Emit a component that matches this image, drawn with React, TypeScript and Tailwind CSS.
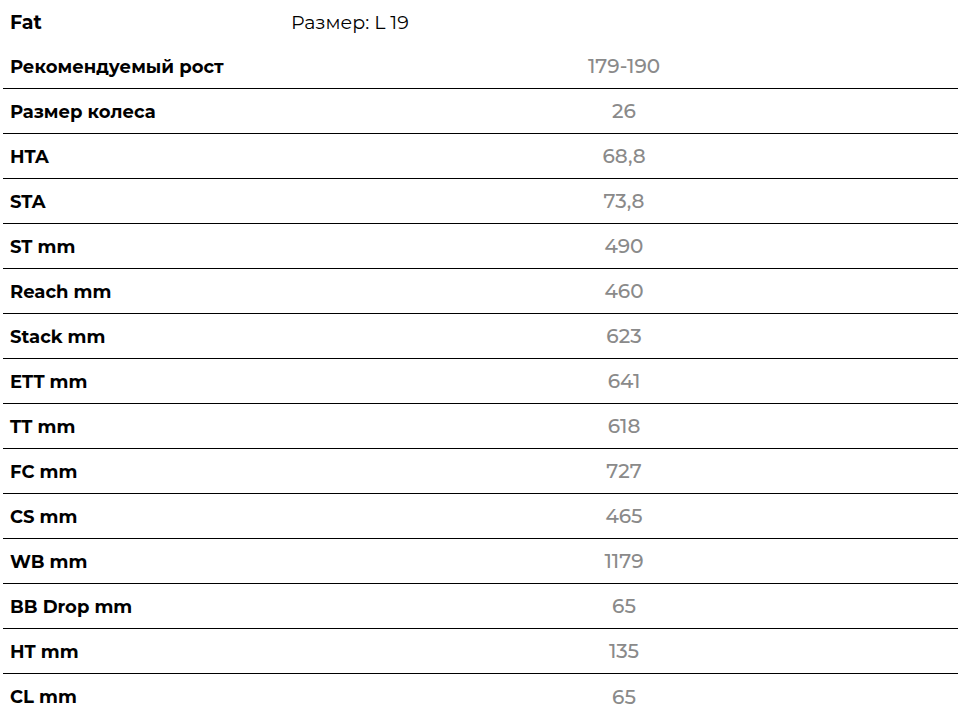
import React from "react";

const rows: [string, string][] = [
  ["Рекомендуемый рост", "179-190"],
  ["Размер колеса", "26"],
  ["HTA", "68,8"],
  ["STA", "73,8"],
  ["ST mm", "490"],
  ["Reach mm", "460"],
  ["Stack mm", "623"],
  ["ETT mm", "641"],
  ["TT mm", "618"],
  ["FC mm", "727"],
  ["CS mm", "465"],
  ["WB mm", "1179"],
  ["BB Drop mm", "65"],
  ["HT mm", "135"],
  ["CL mm", "65"],
];

export default function App() {
  return (
    <div
      className="w-[972px] h-[719px] overflow-hidden bg-white text-black"
      style={{ fontFamily: "'Montserrat', 'Noto Sans', sans-serif" }}
    >
      <div className="ml-[3px] w-[955px]">
        <div className="grid grid-cols-[287px_1fr] h-[44px] items-center pt-[2px]">
          <div className="pl-[7px] font-bold text-[19px]">Fat</div>
          <div className="pl-[1px] text-[19px]">Размер: L 19</div>
        </div>
        {rows.map(([k, v]) => (
          <div
            key={k}
            className="grid grid-cols-[287px_1fr] h-[45px] items-center border-b border-black last:border-b-0"
          >
            <div className="pl-[7px] pt-[2px] font-bold text-[18px]">{k}</div>
            <div className="text-center text-[20px] font-medium text-[#8a8a8a]">{v}</div>
          </div>
        ))}
      </div>
    </div>
  );
}
